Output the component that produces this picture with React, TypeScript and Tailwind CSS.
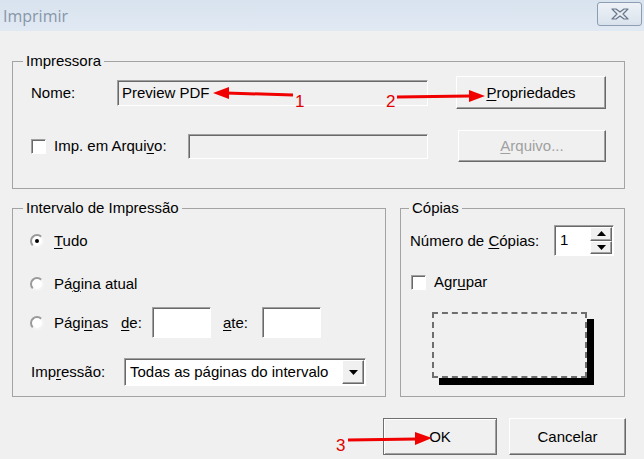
import React from 'react'

const sunken =
  'border border-t-[#a0a0a0] border-l-[#a0a0a0] border-r-white border-b-white shadow-[inset_1px_1px_0_#696969]'
const raised =
  'border border-t-white border-l-white border-r-[#696969] border-b-[#696969] shadow-[inset_-1px_-1px_0_#a0a0a0] bg-[#f0f0f0]'

function U({ children }: { children: React.ReactNode }) {
  return <span className="underline underline-offset-2">{children}</span>
}

function Radio({ checked }: { checked?: boolean }) {
  return (
    <span className="flex h-[14px] w-[14px] shrink-0 items-center justify-center rounded-full border-2 border-t-[#9a9a9a] border-l-[#9a9a9a] border-r-[#f4f4f4] border-b-[#f4f4f4] bg-white">
      {checked && <span className="h-[4px] w-[4px] rounded-full bg-black" />}
    </span>
  )
}

function CheckBox({ className = '' }: { className?: string }) {
  return <span className={`block h-[15px] w-[15px] shrink-0 bg-white ${sunken} ${className}`} />
}

function TitleBar() {
  return (
    <div className="flex h-[31px] items-center justify-between bg-gradient-to-b from-[#d8e3ef] to-[#e1e9f3] pl-[3px] pr-[2px]">
      <span className="font-['Open_Sans',sans-serif] text-[16px] text-[#8796a8]">Imprimir</span>
      <div className="mb-[4px] flex h-[24px] w-[45px] items-center justify-center rounded-[3px] border border-[#8d9db2] bg-gradient-to-b from-[#eef2f7] to-[#d9e2ec]">
        <svg width="18" height="12" viewBox="-9 -6 18 12">
          <polygon
            points="-8,-5 -4,-5 0,-2 4,-5 8,-5 3,0 8,5 4,5 0,2 -4,5 -8,5 -3,0"
            fill="#e6ebf1"
            stroke="#67768c"
            strokeWidth="1.2"
            strokeLinejoin="round"
          />
        </svg>
      </div>
    </div>
  )
}

function Arrows() {
  return (
    <svg className="pointer-events-none absolute inset-0" width="644" height="459">
      <g fill="#f00000" stroke="none">
        <line x1="226" y1="93" x2="293" y2="95" stroke="#f00000" strokeWidth="3" />
        <polygon points="213,93 229,87 229,99" />
        <line x1="397" y1="97" x2="470" y2="96" stroke="#f00000" strokeWidth="3" />
        <polygon points="485,96 469,90 469,102" />
        <line x1="348" y1="440" x2="417" y2="439" stroke="#f00000" strokeWidth="3" />
        <polygon points="432,438 415,432 415,445" />
      </g>
      <g fill="#e00000" fontFamily="'Liberation Sans', sans-serif" fontSize="17">
        <text x="295" y="107">1</text>
        <text x="386" y="107">2</text>
        <text x="336" y="451">3</text>
      </g>
    </svg>
  )
}

export default function App() {
  return (
    <div className="relative h-[459px] w-[644px] overflow-hidden bg-[#f0f0f0] font-['Liberation_Sans',Arial,sans-serif] text-[15px] leading-[18px] text-black">
      <TitleBar />

      <div className="pl-[12px] pr-[19px]">
        {/* Impressora */}
        <fieldset className="mt-[21px] border border-[#a3a3a3] p-0">
          <legend className="ml-[10px] px-[3px] leading-[18px]">Impressora</legend>
          <div className="pl-[18px] pt-[6px] pb-[26px]">
            <div className="flex h-[33px] items-center">
              <span className="w-[86px]">Nome:</span>
              <div className={`flex h-[26px] w-[311px] items-center pl-[4px] bg-[#f0f0f0] ${sunken}`}>Preview PDF</div>
              <button className={`ml-[28px] h-[33px] w-[150px] ${raised}`}>
                <U>P</U>ropriedades
              </button>
            </div>
            <div className="mt-[21px] flex h-[32px] items-center">
              <CheckBox />
              <span className="ml-[8px] w-[134px]">
                Imp. em Arqui<U>v</U>o:
              </span>
              <div className={`h-[25px] w-[240px] bg-[#f0f0f0] ${sunken}`} />
              <button className={`ml-[30px] h-[32px] w-[148px] text-[#a0a0a0] ${raised}`}>
                <U>A</U>rquivo...
              </button>
            </div>
          </div>
        </fieldset>

        <div className="mt-[10px] flex items-stretch gap-[14px]">
          {/* Intervalo */}
          <fieldset className="w-[374px] border border-[#a3a3a3] p-0">
            <legend className="ml-[10px] px-[3px] leading-[18px]">Intervalo de Impressão</legend>
            <div className="pl-[17px] pt-[12px] pb-[10px]">
              <div className="flex h-[24px] items-center gap-[10px]">
                <Radio checked />
                <span>
                  <U>T</U>udo
                </span>
              </div>
              <div className="mt-[19px] flex h-[24px] items-center gap-[10px]">
                <Radio />
                <span>
                  Pá<U>g</U>ina atual
                </span>
              </div>
              <div className="mt-[11px] flex h-[31px] items-center">
                <Radio />
                <span className="ml-[10px] w-[67px]">
                  Pági<U>n</U>as
                </span>
                <span className="w-[31px]">
                  <U>d</U>e:
                </span>
                <div className={`h-[31px] w-[59px] bg-white ${sunken}`} />
                <span className="ml-[12px] w-[39px]">
                  <U>a</U>te:
                </span>
                <div className={`h-[31px] w-[59px] bg-white ${sunken}`} />
              </div>
              <div className="mt-[20px] flex h-[28px] items-center">
                <span className="ml-[1px] w-[93px]">
                  Imp<U>r</U>essão:
                </span>
                <div className={`flex h-[28px] w-[242px] items-center justify-between bg-white pl-[5px] pr-[1px] ${sunken}`}>
                  <span className="text-[15px]">Todas as páginas do intervalo</span>
                  <span className={`flex h-[24px] w-[22px] items-center justify-center ${raised}`}>
                    <svg width="9" height="5" viewBox="0 0 9 5">
                      <polygon points="0,0 9,0 4.5,5" fill="#000" />
                    </svg>
                  </span>
                </div>
              </div>
            </div>
          </fieldset>

          {/* Cópias */}
          <fieldset className="flex-1 border border-[#a3a3a3] p-0">
            <legend className="ml-[8px] px-[3px] leading-[18px]">Cópias</legend>
            <div className="pl-[9px] pt-[8px]">
              <div className="flex h-[31px] items-center">
                <span className="w-[144px]">
                  Número de <U>C</U>ópias:
                </span>
                <div className={`flex h-[31px] w-[60px] items-stretch justify-between bg-white ${sunken}`}>
                  <span className="pl-[5px] pt-[5px]">1</span>
                  <span className="mr-[1px] flex w-[22px] flex-col py-[1px]">
                    <span className={`flex flex-1 items-center justify-center ${raised}`}>
                      <svg width="9" height="5" viewBox="0 0 9 5">
                        <polygon points="0,5 9,5 4.5,0" fill="#000" />
                      </svg>
                    </span>
                    <span className={`flex flex-1 items-center justify-center ${raised}`}>
                      <svg width="9" height="5" viewBox="0 0 9 5">
                        <polygon points="0,0 9,0 4.5,5" fill="#000" />
                      </svg>
                    </span>
                  </span>
                </div>
              </div>
              <div className="mt-[14px] flex h-[24px] items-center">
                <CheckBox className="ml-[1px]" />
                <span className="ml-[8px]">
                  Agr<U>u</U>par
                </span>
              </div>
              <div className="ml-[22px] mt-[18px] h-[66px] w-[155px] border-2 border-dashed border-[#6e6e6e] bg-[#f0f0f0] shadow-[7px_7px_0_#000]" />
            </div>
          </fieldset>
        </div>

        <div className="-mr-[1px] mt-[21px] flex justify-end gap-[12px]">
          <button className="h-[37px] w-[114px] border border-[#707070] bg-[#f0f0f0] shadow-[inset_1px_1px_0_#fff,inset_-1px_-1px_0_#a0a0a0]">
            OK
          </button>
          <button className={`h-[37px] w-[117px] ${raised}`}>Cancelar</button>
        </div>
      </div>

      <Arrows />
    </div>
  )
}
